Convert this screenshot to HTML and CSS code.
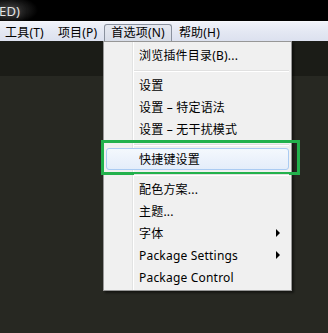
FILE: index.html
```html
<!DOCTYPE html>
<html>
<head>
<meta charset="utf-8">
<link rel="stylesheet" href="styles.css">
</head>
<body>
<div class="window">
  <div class="titlebar"><span class="title">ED)</span></div>
  <div class="menubar">
    <div class="mi first">工具(T)</div>
    <div class="mi">项目(P)</div>
    <div class="mi open">首选项(N)</div>
    <div class="mi">帮助(H)</div>
  </div>
  <div class="tabbar"></div>
  <div class="editor"></div>

  <div class="dropdown">
    <div class="item">浏览插件目录(B)...</div>
    <div class="sep"></div>
    <div class="item">设置</div>
    <div class="item">设置 – 特定语法</div>
    <div class="item">设置 – 无干扰模式</div>
    <div class="sep"></div>
    <div class="item hl">快捷键设置</div>
    <div class="sep"></div>
    <div class="item">配色方案...</div>
    <div class="item">主题...</div>
    <div class="item">字体<span class="arrow"></span></div>
    <div class="item">Package Settings<span class="arrow"></span></div>
    <div class="item">Package Control</div>
  </div>
  <div class="mark"></div>
</div>
</body>
</html>
```

FILE: styles.css
```css
html, body {
  margin: 0;
  padding: 0;
}
body {
  width: 328px;
  height: 333px;
  overflow: hidden;
  background: #272822;
  font-family: "Noto Sans", "Noto Sans CJK SC", sans-serif;
  font-size: 12px;
  letter-spacing: 0.2px;
  color: #000;
}
.window {
  position: relative;
  width: 328px;
  height: 333px;
}
.titlebar {
  height: 21px;
  background: radial-gradient(ellipse 30px 14px at 8px 10px, #3a3a3a 0%, #1a1a1a 60%, #000 100%);
  background-color: #000;
  display: flex;
  align-items: center;
}
.title {
  margin-left: -1px;
  color: #e6e6e6;
  font-size: 13px;
  line-height: 20px;
  text-shadow: 0 0 6px #666;
}
.menubar {
  height: 20px;
  box-sizing: border-box;
  background: linear-gradient(#f1f3fa, #e4e8f3 50%, #dce1ef);
  border-top: 1px solid #f7f8fc;
  display: flex;
  align-items: flex-end;
}
.mi {
  height: 17px;
  box-sizing: border-box;
  border: 1px solid transparent;
  border-bottom: none;
  padding: 0 6px;
  line-height: 15px;
  white-space: nowrap;
}
.mi.first {
  margin-left: -2px;
}
.mi.open {
  border-color: #8a919e;
  border-radius: 3px 3px 0 0;
  background: linear-gradient(#e5e8f0, #d8dde8);
}
.tabbar {
  height: 35px;
  background: #1b1c17;
}
.editor {
  height: 257px;
  background: #272822;
}
.dropdown {
  position: absolute;
  left: 103px;
  top: 41px;
  width: 189px;
  box-sizing: border-box;
  border: 1px solid #979797;
  background: #f0f0f0;
  padding: 2px 0;
  box-shadow: 2px 2px 2px rgba(0, 0, 0, 0.45);
}
.dropdown::before {
  content: "";
  position: absolute;
  left: 28px;
  top: 0;
  bottom: 0;
  width: 1px;
  background: #e2e3e3;
}
.dropdown::after {
  content: "";
  position: absolute;
  left: 29px;
  top: 0;
  bottom: 0;
  width: 1px;
  background: #ffffff;
}
.item {
  position: relative;
  z-index: 1;
  height: 22px;
  box-sizing: border-box;
  margin: 0 2px;
  padding-left: 32px;
  display: flex;
  align-items: center;
  white-space: nowrap;
  border: 1px solid transparent;
  border-radius: 3px;
}
.item.hl {
  border-color: #aacbf2;
  background: linear-gradient(#f4f8fd, #e4edfa);
}
.arrow {
  margin-left: auto;
  margin-right: 8px;
  width: 0;
  height: 0;
  border-left: 4px solid #000;
  border-top: 4px solid transparent;
  border-bottom: 4px solid transparent;
}
.sep {
  position: relative;
  z-index: 1;
  height: 8px;
  box-sizing: border-box;
  margin: 0 2px 0 30px;
  padding-top: 4px;
}
.sep::before {
  content: "";
  display: block;
  height: 1px;
  background: #e0e0e0;
  border-bottom: 1px solid #ffffff;
}
.mark {
  position: absolute;
  left: 101px;
  top: 140px;
  width: 199px;
  height: 35px;
  box-sizing: border-box;
  border: 3px solid #22b14c;
}
```
